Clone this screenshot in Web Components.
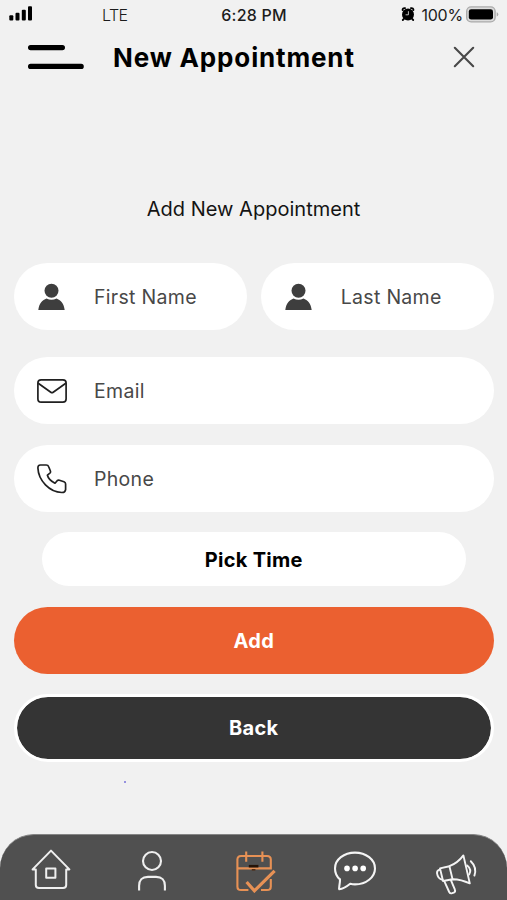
<!DOCTYPE html>
<html lang="en">
<head>
<meta charset="utf-8">
<title>New Appointment</title>
<style>
  body { margin: 0; background: #f1f1f1; font-family: Inter, "Liberation Sans", sans-serif; color: #000; }
</style>
</head>
<body>
<appointment-screen></appointment-screen>
<script>
function define(name, html) {
  const t = document.createElement('template');
  t.innerHTML = html;
  customElements.define(name, class extends HTMLElement {
    constructor() {
      super();
      this.attachShadow({ mode: 'open' }).appendChild(t.content.cloneNode(true));
    }
  });
}

const ICONS = {
  menu: [58, 28, '<g fill="none" stroke="#000" stroke-width="5.2" stroke-linecap="round"><path d="M3.6 4.6H35.4M3.6 23.4H54.2"/></g>'],
  close: [24, 24, '<path d="M2.8 2.8 21.2 21.2M21.2 2.8 2.8 21.2" fill="none" stroke="#484848" stroke-width="2.1" stroke-linecap="round"/>'],
  signal: [24, 16, '<rect x="0.3" y="10.3" width="4" height="5.2" rx="1"/><rect x="6.5" y="7.8" width="4" height="7.7" rx="1"/><rect x="12.8" y="4.8" width="4" height="10.7" rx="1"/><rect x="19" y="1.2" width="4" height="14.3" rx="1"/>'],
  alarm: [14, 14, '<path d="M1.6 3.2A1.8 1.8 0 0 1 4 1.2M12.4 3.2A1.8 1.8 0 0 0 10 1.2M2.8 12 1.8 13M11.2 12l1 1" fill="none" stroke="#000" stroke-width="1.8" stroke-linecap="round"/><circle cx="7" cy="7.4" r="6"/><path d="M7.4 4.2V7.8H4.6" fill="none" stroke="#d0d0d0" stroke-width=".9"/>'],
  battery: [33, 17, '<rect x=".7" y=".9" width="28.4" height="15" rx="4.4" fill="#dcdcdc" stroke="#aaa" stroke-width="1.4"/><rect x="2.8" y="3.2" width="24.2" height="10.4" rx="2.4"/><path d="M30.7 6.2q1.6.6 1.6 2.2t-1.6 2.2Z" fill="#aaa"/>'],
  person: [30, 30, '<g fill="#3e3e3e"><circle cx="14.5" cy="8.8" r="7"/><path d="M1.3 28C2.1 21.6 5.5 18 9.5 16.6Q14.5 19 19.5 16.6C23.5 18 26.9 21.6 27.7 28Z"/></g>'],
  mail: [30, 26, '<g fill="none" stroke="#202020" stroke-width="1.7" stroke-linejoin="round"><rect x=".9" y="1.9" width="28.2" height="22.3" rx="3.2"/><path d="M1.2 5.2 13.8 14.2q1.2.9 2.4 0L28.8 5.2"/></g>'],
  phone: [30, 30, '<path d="M3.4 1H9.2C10.7 1 11.3 1.6 11.7 2.8L13.5 7.2Q13.8 8.4 12.9 9.2L10.4 11.2Q11.6 16 18 19.2L20.2 16.7Q21.1 15.8 22.4 16.2L27 17.8Q28.6 18.5 28.6 20V25.6Q28.2 28.6 24.8 28.5C12.6 28 1.4 16.6.9 4C.9 2 1.6 1 3.4 1Z" fill="none" stroke="#202020" stroke-width="1.7" stroke-linejoin="round"/>'],
  home: [40, 42, '<g fill="none" stroke="#efefef" stroke-width="2" stroke-linejoin="round"><path d="M4.8 20.4H1.6L20 1.6 38.4 20.4H35.2V36Q35.2 39 32 39H8Q4.8 39 4.8 36Z"/><rect x="15.2" y="19.6" width="9.2" height="9.2"/></g>'],
  user: [30, 42, '<g fill="none" stroke="#efefef" stroke-width="2.1"><circle cx="15" cy="11" r="9"/><path d="M2.1 40.4V35.8Q2.1 26.9 11 26.9H19Q27.9 26.9 27.9 35.8V40.4"/></g>'],
  calendar: [40, 42, '<g fill="none" stroke="#e79155" stroke-width="2.1"><path d="M12.4 39H5Q1.4 39 1.4 35.4V8.6Q1.4 5 5 5H31Q34.8 5 34.8 8.6V18.4M34.8 28V35.4Q34.8 39 31 39H25M1.4 17.4H34.8M10.2.4V10.8M26.4.4V10.8" stroke-linejoin="round"/><path d="M10.6 31 18.4 39.8 38.6 19.8" stroke-width="3.2"/></g><path d="M12.8 15.2H22.4" stroke="#251307" stroke-width="2.6"/><path d="M15.8 18.8H19.4" stroke="#4b2a14" stroke-width="1.5"/>'],
  chat: [44, 42, '<g fill="none" stroke="#f4f4f4" stroke-width="2.1" stroke-linejoin="round"><path d="M7 29.4C3.8 26.6 2 23 2 18.4 2 9.6 11 2.6 22 2.6S42 9.6 42 18.4 33 34.4 22 34.4C20.4 34.4 18.8 34.2 17.2 33.8 14 36.4 10 38.9 6.2 39.2 5.4 38.6 7.2 34 7 29.4Z"/></g><g fill="#fff"><circle cx="14" cy="18.4" r="2.8"/><circle cx="22.1" cy="18.4" r="2.8"/><circle cx="30.2" cy="18.4" r="2.8"/></g>'],
  megaphone: [44, 44, '<g fill="none" stroke="#f4f4f4" stroke-width="1.9" stroke-linejoin="round" stroke-linecap="round"><path d="M5 17.4 14.4 15.2Q22.8 12 28.4 4.4L34.8 32.4Q26.4 28.4 17.6 28.2L8 30Z"/><path d="M14.4 15.2 17.6 28.4M5 18.6Q1.8 19.2 2 22.2 2.8 28 7.4 28.8M9.4 30.4 14.2 41Q15.2 42.8 17.2 42.2L18.8 41.6Q20.8 40.6 19.8 38.4L15.8 28.8M32.2 14.4Q37 18.4 34.2 23.4M35.8 10.2Q42.2 16.4 39.4 24.6"/></g>']
};
customElements.define('ui-icon', class extends HTMLElement {
  connectedCallback() {
    if (this.shadowRoot) return;
    const [w, h, body] = ICONS[this.getAttribute('name')];
    this.attachShadow({ mode: 'open' }).innerHTML =
      `<style>:host{display:block;flex:none;width:${w}px;height:${h}px}svg{display:block}</style>` +
      `<svg width="${w}" height="${h}" viewBox="0 0 ${w} ${h}" aria-hidden="true">${body}</svg>`;
  }
});

define('status-bar', `
<style>
  :host { display: grid; grid-template-columns: 1fr auto 1fr; align-items: center; height: 29px; padding: 0 8px 0 9px; box-sizing: border-box; font-size: 16px; color: #1c1c1c; white-space: nowrap; }
  .left { display: flex; align-items: center; gap: 69px; }
  .left span { font-weight: 300; letter-spacing: -.6px; }
  .time { font-weight: 500; letter-spacing: .2px; }
  .right { display: flex; align-items: center; justify-content: flex-end; }
  .right span { margin: 0 3px 0 6px; letter-spacing: -.2px; font-size: 16px; }
  ui-icon[name=signal] { margin-top: -3px; }
  ui-icon[name=battery], ui-icon[name=alarm] { margin-top: -1px; }
</style>
<div class="left"><ui-icon name="signal"></ui-icon><span>LTE</span></div>
<div class="time">6:28 PM</div>
<div class="right"><ui-icon name="alarm"></ui-icon><span>100%</span><ui-icon name="battery"></ui-icon></div>`);

define('app-header', `
<style>
  :host { display: flex; align-items: center; height: 56px; padding: 0 31px 0 27px; box-sizing: border-box; }
  h1 { flex: 1; margin: 1px 0 0 28px; font-size: 26px; line-height: 32px; font-weight: 700; letter-spacing: .85px; white-space: nowrap; }
</style>
<ui-icon name="menu"></ui-icon><h1><slot></slot></h1><ui-icon name="close"></ui-icon>`);

define('form-field', `
<style>
  :host { display: flex; align-items: center; gap: 27px; flex: 1; height: 67px; box-sizing: border-box; padding-left: 23px; border-radius: 34px; background: #fff; color: #484848; font-size: 19.5px; letter-spacing: .3px; white-space: nowrap; }
</style>
<slot name="icon"></slot><span><slot></slot></span>`);

define('pill-button', `
<style>
  :host { display: flex; align-items: center; justify-content: center; height: 67px; box-sizing: border-box; border-radius: 34px; font-size: 20px; font-weight: 700; letter-spacing: .3px; color: #fff; }
  :host([kind=time]) { height: 54px; margin: 0 28px; background: #fff; color: #000; border-radius: 27px; }
  :host([kind=time]) span, :host([kind=primary]) span { padding-top: 1px; }
  :host([kind=primary]) { background: #eb6030; }
  :host([kind=dark]) { height: 68px; background: #343434; border: 3px solid #fff; background-clip: padding-box; }
</style>
<span><slot></slot></span>`);

define('tab-bar', `
<style>
  :host { display: flex; height: 66px; padding: 16px 0 0 31px; box-sizing: border-box; background: #505050; border-radius: 34px 34px 0 0; border-top: 1px solid #858585; }
  ui-icon[name=home] { margin-top: -2px; }
  ui-icon[name=user] { margin: -1px 0 0 66px; }
  ui-icon[name=calendar] { margin: 0 0 0 69px; }
  ui-icon[name=chat] { margin: -1px 0 0 57px; }
  ui-icon[name=megaphone] { margin: 0 0 0 58px; }
</style>
<ui-icon name="home"></ui-icon><ui-icon name="user"></ui-icon><ui-icon name="calendar"></ui-icon><ui-icon name="chat"></ui-icon><ui-icon name="megaphone"></ui-icon>`);

define('appointment-screen', `
<style>
  :host { display: flex; flex-direction: column; height: 900px; width: 507px; overflow: hidden; background: #f1f1f1; }
  h2 { margin: 112px 0 0; font-size: 20px; line-height: 24px; font-weight: 400; letter-spacing: .02px; text-align: center; color: #141414; }
  form { display: flex; flex-direction: column; margin: 42px 13.5px 0 14px; }
  .names { display: flex; gap: 14px; margin-bottom: 27px; }
  form > form-field { flex: none; }
  form > form-field + form-field { margin-top: 21px; }
  pill-button[kind=time] { margin: 20px 28px 0; }
  pill-button[kind=primary] { margin-top: 20.5px; }
  pill-button[kind=dark] { margin-top: 20.5px; }
  .dot { width: 2px; height: 2px; margin: 19px 0 0 124px; background: #7770d8; border-radius: 1px; }
  tab-bar { margin-top: auto; }
</style>
<status-bar></status-bar>
<app-header>New Appointment</app-header>
<h2>Add New Appointment</h2>
<form>
  <div class="names">
    <form-field><ui-icon slot="icon" name="person"></ui-icon>First Name</form-field>
    <form-field><ui-icon slot="icon" name="person"></ui-icon>Last Name</form-field>
  </div>
  <form-field><ui-icon slot="icon" name="mail"></ui-icon>Email</form-field>
  <form-field><ui-icon slot="icon" name="phone"></ui-icon>Phone</form-field>
  <pill-button kind="time">Pick Time</pill-button>
  <pill-button kind="primary">Add</pill-button>
  <pill-button kind="dark">Back</pill-button>
</form>
<div class="dot"></div>
<tab-bar></tab-bar>`);
</script>
</body>
</html>
